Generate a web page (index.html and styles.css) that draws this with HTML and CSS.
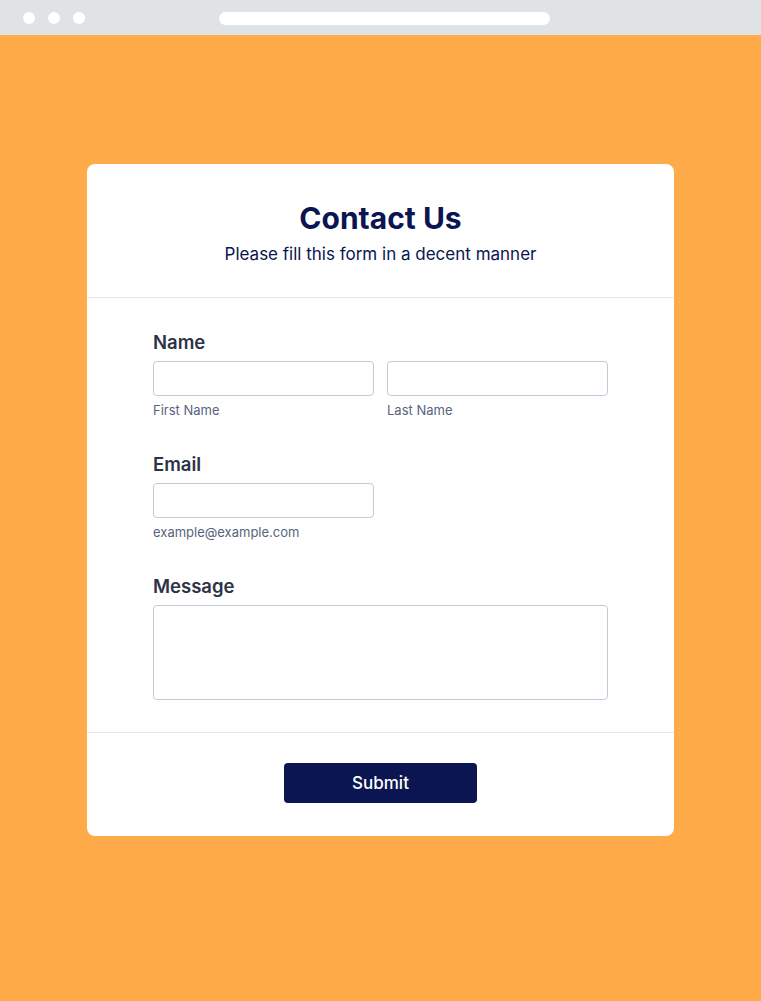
FILE: index.html
```html
<!DOCTYPE html>
<html>
<head>
<meta charset="utf-8">
<link rel="stylesheet" href="styles.css">
</head>
<body>
<div class="browser-bar">
  <div class="dots"><span class="dot"></span><span class="dot"></span><span class="dot"></span></div>
  <div class="url"></div>
</div>
<main class="stage">
  <form class="card">
    <header class="card-header">
      <h1 class="title">Contact Us</h1>
      <p class="subtitle">Please fill this form in a decent manner</p>
    </header>
    <section class="card-body">
      <div class="field">
        <label class="label">Name</label>
        <div class="row">
          <div class="col">
            <input class="input" type="text">
            <span class="sublabel">First Name</span>
          </div>
          <div class="col">
            <input class="input" type="text">
            <span class="sublabel">Last Name</span>
          </div>
        </div>
      </div>
      <div class="field">
        <label class="label">Email</label>
        <div class="row">
          <div class="col">
            <input class="input" type="text">
            <span class="sublabel">example@example.com</span>
          </div>
        </div>
      </div>
      <div class="field">
        <label class="label">Message</label>
        <textarea class="textarea"></textarea>
      </div>
    </section>
    <footer class="card-footer">
      <button class="submit" type="button">Submit</button>
    </footer>
  </form>
</main>
</body>
</html>
```
FILE: styles.css
```css
* { box-sizing: border-box; }
html, body { margin: 0; padding: 0; }
body {
  background: #ffab4a;
  font-family: "Inter", "Noto Sans", sans-serif;
  min-height: 1001px;
}
.browser-bar {
  height: 35px;
  background: #dfe3e6;
  display: flex;
  align-items: center;
  padding-left: 23px;
  padding-top: 1px;
}
.dots { display: flex; gap: 13px; }
.dot {
  width: 12px; height: 12px; border-radius: 50%;
  background: #fff; display: block;
}
.url {
  margin-left: 134px;
  width: 331px; height: 13px;
  border-radius: 7px;
  background: #fff;
}
.stage {
  padding-top: 129px;
  display: flex;
  justify-content: center;
}
.card {
  width: 587px;
  background: #fff;
  border-radius: 8px;
}
.card-header {
  padding: 36px 0 32px;
  text-align: center;
  border-bottom: 1px solid #e3e8ee;
}
.title {
  margin: 0;
  font-size: 30px;
  line-height: 36px;
  font-weight: 700;
  color: #0a1551;
}
.subtitle {
  margin: 7px 0 0;
  font-size: 17px;
  line-height: 22px;
  color: #0a1551;
}
.card-body {
  padding: 31px 66px 32px;
  display: flex;
  flex-direction: column;
  gap: 33px;
  border-bottom: 1px solid #e3e8ee;
}
.field { display: flex; flex-direction: column; }
.label {
  font-size: 18.5px;
  line-height: 24px;
  padding-top: 1px;
  font-weight: 600;
  color: #2c3345;
  margin-bottom: 7px;
}
.row { display: flex; gap: 13px; }
.col { width: 221px; display: flex; flex-direction: column; }
.input {
  width: 221px; height: 35px;
  border: 1px solid #c3cad8;
  border-radius: 4px;
  margin: 0;
  background: #fff;
}
.sublabel {
  margin-top: 6px;
  font-size: 13px;
  line-height: 16px;
  color: #57647e;
}
.textarea {
  width: 455px; height: 95px;
  border: 1px solid #c3cad8;
  border-radius: 4px;
  margin: 0;
  resize: none;
  display: block;
}
.card-footer {
  padding: 30px 0 33px;
  display: flex;
  justify-content: center;
}
.submit {
  width: 193px; height: 40px;
  border: 0;
  border-radius: 4px;
  background: #0a1551;
  color: #fff;
  font-family: "Inter", "Noto Sans", sans-serif;
  font-size: 17px;
  font-weight: 500;
}
```
